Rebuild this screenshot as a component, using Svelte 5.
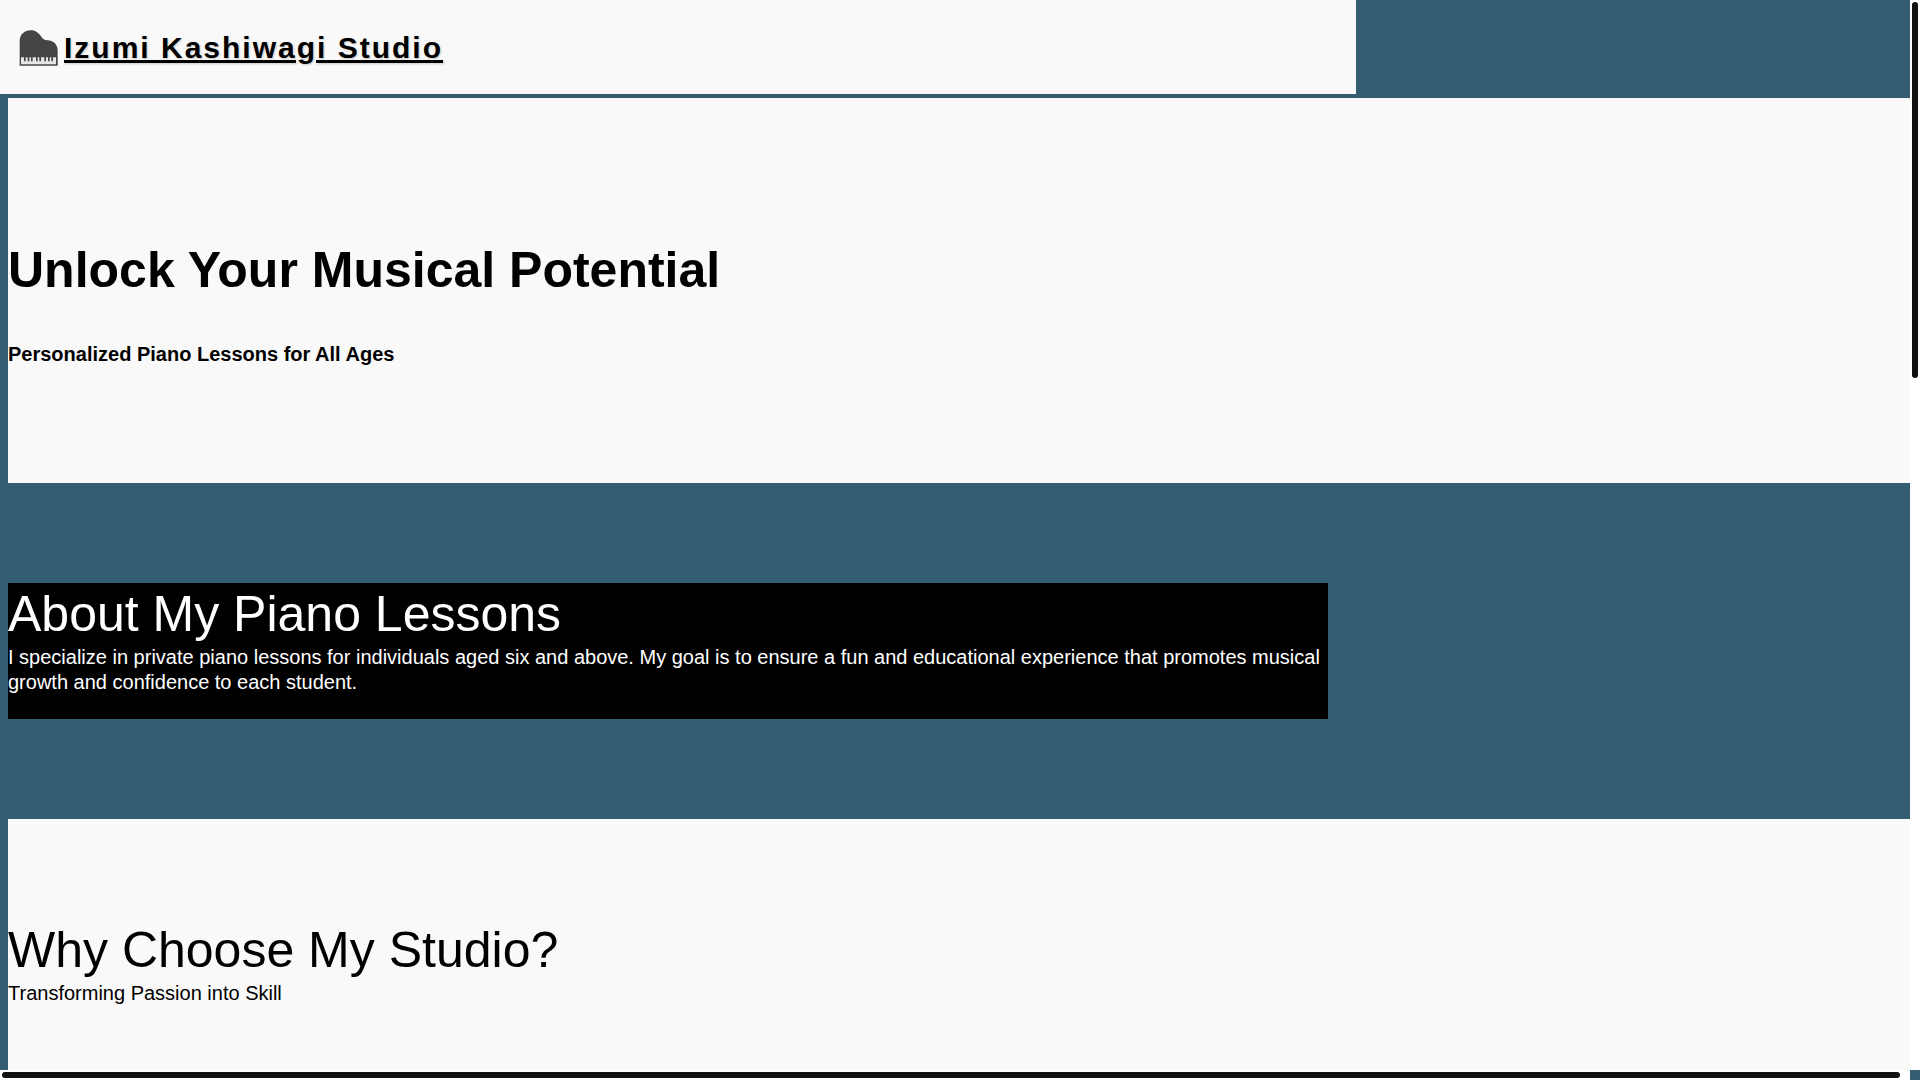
<script lang="ts">
	const about =
		'I specialize in private piano lessons for individuals aged six and above. My goal is to ensure a fun and educational experience that promotes musical growth and confidence to each student.';
	const keys = [15, 26, 36, 51, 61, 76, 87, 97];
</script>

<div class="window">
	<div class="page">
		<header>
			<a class="logo" href="/">
				<svg viewBox="0 0 117 108" aria-hidden="true">
					<path
						d="M2 107V34C2 14 16 1 35 1C50 1 59 9 66 19C71 27 76 31 86 31C104 32 116 44 116 62V107Z"
						fill="#444"
					/>
					<path d="M6 82H111V103H6Z" fill="#e6e6e6" />
					{#each keys as x}
						<path d="M{x} 80h5v14h-5z" fill="#444" />
					{/each}
				</svg>
				<span>Izumi Kashiwagi Studio</span>
			</a>
		</header>

		<main>
			<section class="hero">
				<h1>Unlock Your Musical Potential</h1>
				<h4>Personalized Piano Lessons for All Ages</h4>
			</section>

			<section class="about">
				<h2>About My Piano Lessons</h2>
				<p>{about}</p>
			</section>

			<section class="why">
				<h2>Why Choose My Studio?</h2>
				<p>Transforming Passion into Skill</p>
			</section>
		</main>
	</div>

	<div class="track vertical"><div class="thumb"></div></div>
	<div class="track horizontal"><div class="thumb"></div></div>
</div>

<style>
	:global(body) {
		margin: 0;
		background-color: #355d72;
		font-family: 'Liberation Sans', Arial, sans-serif;
		font-size: 20px;
		line-height: 25px;
		color: #000;
	}

	.window {
		display: grid;
		grid-template-columns: minmax(0, 1fr) 10px;
		grid-template-rows: minmax(0, 1fr) 10px;
		height: 100vh;
	}

	.page {
		display: flex;
		flex-direction: column;
		gap: 4px;
		overflow: hidden;
	}

	header {
		display: flex;
		align-items: center;
		flex: none;
		width: 71%;
		height: 94px;
		padding: 2px 0 0 19px;
		box-sizing: border-box;
		background-color: #f9f9f9;
	}

	.logo {
		display: flex;
		align-items: center;
		gap: 6px;
		color: #000;
		font-size: 30px;
		font-weight: bold;
		line-height: 36px;
		letter-spacing: 2px;
		text-decoration: none;
		text-shadow: 1px 1px 2px rgba(0, 0, 0, 0.2);
	}

	.logo span {
		text-decoration: underline;
	}

	.logo svg {
		width: 39px;
		height: 36px;
	}

	main {
		margin-left: 8px;
	}

	h1,
	h2,
	h4,
	p {
		margin: 0;
	}

	h1,
	h2 {
		font-size: 50px;
		line-height: 62px;
	}

	h2 {
		font-weight: normal;
	}

	.hero {
		display: grid;
		gap: 41px;
		padding: 141px 0 116px;
		background-color: #f9f9f9;
	}

	.about {
		width: 1320px;
		max-width: 100%;
		margin: 100px 0;
		padding-bottom: 24px;
		background-color: #000;
		color: #fff;
	}

	.why {
		padding: 100px 0;
		background-color: #f9f9f9;
	}

	.track {
		padding: 2px;
		background-color: #fff;
	}

	.thumb {
		border-radius: 3px;
		background-color: #111;
	}

	.vertical .thumb {
		height: 35.3%;
	}

	.horizontal .thumb {
		width: 99.6%;
		height: 100%;
	}
</style>
